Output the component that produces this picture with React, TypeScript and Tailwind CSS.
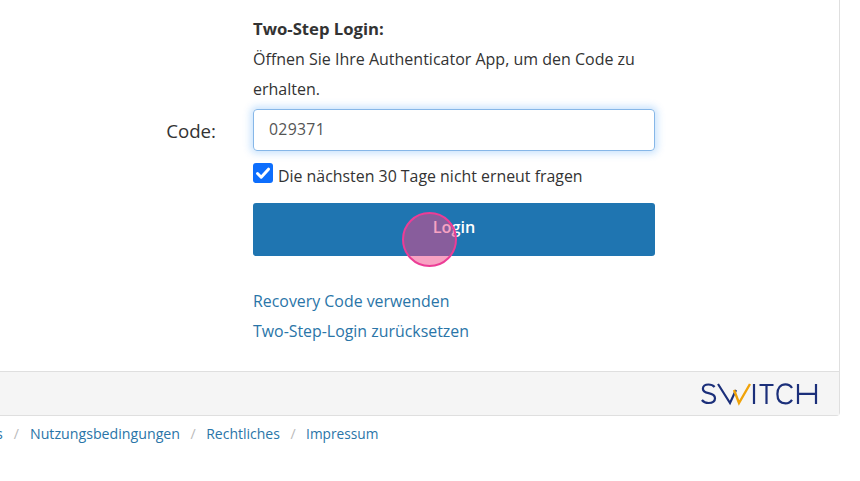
const font = { fontFamily: '"Open Sans", "Noto Sans", sans-serif' };

function SwitchLogo() {
  return (
    <svg width="118" height="24" viewBox="0 0 118 24" fill="none" aria-label="SWITCH">
      <g stroke="#1b2f7a" strokeWidth="2.2" fill="none">
        <path d="M14.6 5C13 3.2 11 2.5 8.5 2.5C5 2.5 2.9 4.2 2.9 6.8C2.9 9.6 5.2 10.5 8.6 11.2C12.2 12 15 13 15 16.3C15 19.3 12.3 21 8.5 21C5.5 21 3.4 19.9 1.9 18" />
        <path d="M18 2L30 21L36 8" />
        <path d="M54 2V22" />
        <path d="M59.5 3H73.5M66.5 3V22" />
        <path d="M92 6C90.5 3.6 88.3 2.4 85.5 2.4C80.5 2.4 77.4 6 77.4 12C77.4 18 80.5 21.4 85.5 21.4C88.3 21.4 90.5 20.2 92 17.8" />
        <path d="M98 2V22M116 2V22M98 11.8H116" />
      </g>
      <path d="M34 8L39 21L50 2" stroke="#f0a30a" strokeWidth="2.4" fill="none" />
    </svg>
  );
}

export default function App() {
  return (
    <div className="relative w-[860px] h-[481px] overflow-hidden bg-white text-[16px] text-[#212529]" style={font}>
      <div className="w-[840px] h-[416px] flex flex-col border-r border-b border-[#dfdfdf] rounded-br-[4px]">
        <div className="h-[371px] flex pt-[14px]">
          <div className="w-[216px] shrink-0 pt-[102px] text-right text-[18.7px] leading-[30px] text-[#333]">Code:</div>
          <div className="w-[402px] ml-[37px]">
            <div className="leading-[30px] text-[#333]">
              <div className="font-bold text-[16.7px]">Two-Step Login:</div>
              <div>Öffnen Sie Ihre Authenticator App, um den Code zu erhalten.</div>
            </div>
            <div className="mt-[5px] h-[42px] px-[15px] flex items-center rounded-[4px] border border-[#86b7e8] shadow-[0_0_7px_3px_rgba(90,170,250,0.3)] text-[#555] text-[15.8px] tracking-[0.3px]">
              029371
            </div>
            <div className="mt-[10px] h-[30px] flex items-center gap-[5px] text-[#333]">
              <span className="w-[20px] h-[20px] -mt-[6px] rounded-[3px] bg-[#0d6efd] flex items-center justify-center">
                <svg width="20" height="20" viewBox="0 0 20 20" fill="none">
                  <path d="M4.5 10.5l3.7 3.7l7.3-8" stroke="#fff" strokeWidth="3" strokeLinecap="round" strokeLinejoin="round" />
                </svg>
              </span>
              <span className="text-[15.9px] pt-[2px]">Die nächsten 30 Tage nicht erneut fragen</span>
            </div>
            <div className="mt-[12px] h-[53px] rounded-[3px] bg-[#1f75b1] flex items-center justify-center text-white font-semibold pb-[5px] text-[16.2px]">
              Login
            </div>
            <div className="mt-[30px] leading-[30px] text-[#2a75a8] text-[15.9px]">
              <div>Recovery Code verwenden</div>
              <div>Two-Step-Login zurücksetzen</div>
            </div>
          </div>
        </div>
        <div className="h-[44px] bg-[#f5f5f5] border-t border-[#dfdfdf] flex items-center justify-end pr-[21px]">
          <SwitchLogo />
        </div>
      </div>
      <div className="mt-[6px] -ml-[4px] flex items-center text-[14.2px] leading-[24px] text-[#2a75a8]">
        <span>s</span>
        <span className="mx-[11px] text-[#bbb]">/</span>
        <span>Nutzungsbedingungen</span>
        <span className="mx-[10.5px] text-[#bbb]">/</span>
        <span className="text-[14px]">Rechtliches</span>
        <span className="mx-[10.5px] text-[#bbb]">/</span>
        <span className="text-[13.7px]">Impressum</span>
      </div>
      <div className="absolute left-[402px] top-[212px] w-[55px] h-[55px] rounded-full border-2 border-[#ec3d96] bg-[#f24687]/50" />
    </div>
  );
}
